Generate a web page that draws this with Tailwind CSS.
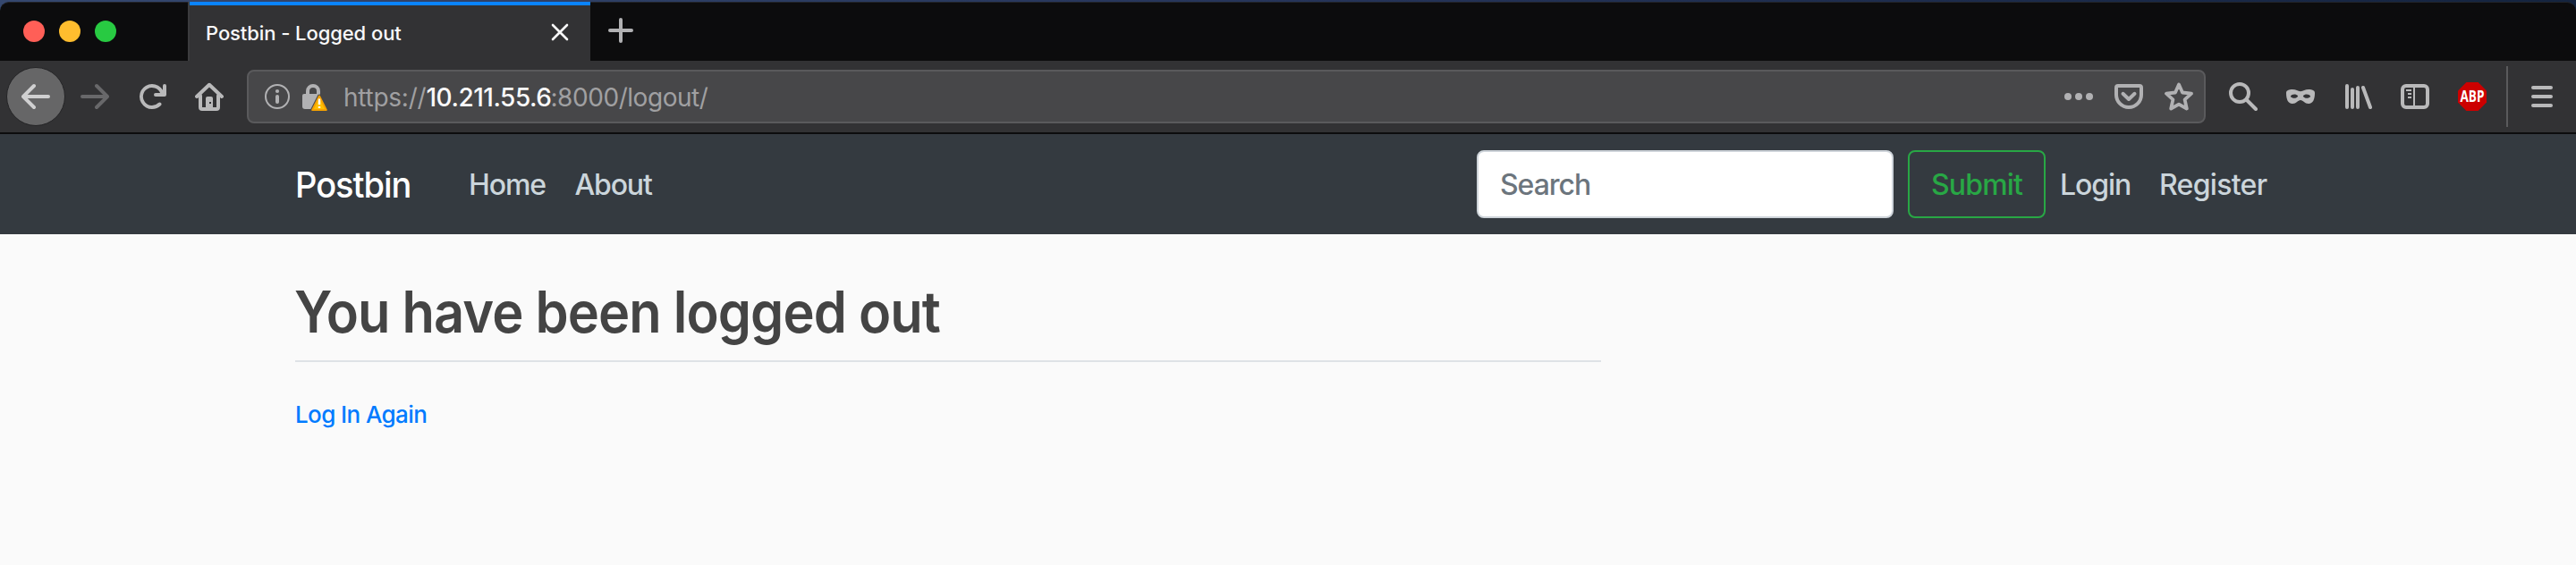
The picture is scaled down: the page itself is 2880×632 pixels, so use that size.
<!DOCTYPE html>
<html lang="en">
<head>
<meta charset="utf-8">
<title>Postbin - Logged out</title>
<script src="https://cdn.jsdelivr.net/npm/@tailwindcss/browser@4"></script>
</head>
<body class="bg-[#fafafa] font-['Inter','Liberation_Sans',sans-serif] w-[2880px] h-[632px] overflow-hidden">
<!-- Tab strip -->
<div class="bg-linear-to-r from-[#35486f] via-[#26355a] to-[#14243f] pt-0.5">
<div class="h-[66px] bg-[#0c0c0d] border-t border-[#222429] rounded-t-[10px] flex items-start">
  <div class="w-[210px] h-full pl-[26px] pt-5 flex gap-4">
    <i class="size-6 rounded-full bg-[#ff5f57]"></i>
    <i class="size-6 rounded-full bg-[#ffbd2e]"></i>
    <i class="size-6 rounded-full bg-[#28ca42]"></i>
  </div>
  <div class="relative -mt-px w-[450px] h-[66px] bg-[#323234] border-l-2 border-[#3c3c3e] flex items-start justify-between pl-[18px] pr-6">
    <div class="absolute top-0 left-0 right-0 h-1 bg-[#0a84ff]"></div>
    <span class="text-[22px] leading-[26px] mt-[22px] font-[450] tracking-[-0.080px] text-[#f9f9fa]">Postbin - Logged out</span>
    <svg class="w-5 h-5 mt-6" viewBox="0 0 20 20" stroke="#f9f9fa" stroke-width="2.6" stroke-linecap="round"><path d="M2 2l16 16M18 2L2 18"/></svg>
  </div>
  <svg class="w-7 h-7 ml-5 mt-[17px]" viewBox="0 0 28 28" stroke="#b1b1b3" stroke-width="4" stroke-linecap="round"><path d="M14 2v24M2 14h24"/></svg>
</div>
</div>
<!-- Toolbar -->
<div class="h-[82px] bg-[#323234] border-b-2 border-[#0c0c0d] flex items-center pl-[7px] text-[#b9b9ba]">
  <div class="size-[66px] rounded-full bg-[#666667] border border-[#242426] flex items-center justify-center">
    <svg class="size-8" viewBox="0 0 16 16" fill="#d0d0d1"><path d="M15 7H3.414l4.293-4.293a1 1 0 0 0-1.414-1.414l-6 6a1 1 0 0 0 0 1.414l6 6a1 1 0 0 0 1.414-1.414L3.414 9H15a1 1 0 0 0 0-2z"/></svg>
  </div>
  <svg class="size-8 ml-[17px] -scale-x-100" viewBox="0 0 16 16" fill="#68686a"><path d="M15 7H3.414l4.293-4.293a1 1 0 0 0-1.414-1.414l-6 6a1 1 0 0 0 0 1.414l6 6a1 1 0 0 0 1.414-1.414L3.414 9H15a1 1 0 0 0 0-2z"/></svg>
  <svg class="size-8 ml-8" viewBox="0 0 16 16" fill="currentColor"><path d="M15 1a1 1 0 0 0-1 1v2.418A6.995 6.995 0 1 0 8 15a6.954 6.954 0 0 0 4.95-2.05 1 1 0 0 0-1.414-1.414A5.019 5.019 0 1 1 12.549 6H10a1 1 0 0 0 0 2h5a1 1 0 0 0 1-1V2a1 1 0 0 0-1-1z"/></svg>
  <svg class="size-8 ml-8" viewBox="0 0 32 32" fill="none" stroke="currentColor" stroke-width="4" stroke-linecap="round" stroke-linejoin="round"><path d="M2 16L16 2.800 30 16"/><path d="M6 15v13a2 2 0 0 0 2 2h16a2 2 0 0 0 2-2V15"/><path fill="currentColor" stroke="none" d="M12 31V18a2 2 0 0 1 2-2h4a2 2 0 0 1 2 2v13z"/><path fill="#323234" stroke="none" d="M16 22h2v2h-2z"/></svg>
  <div class="ml-[26px] w-[2190px] h-[60px] rounded-lg bg-[#474749] border-2 border-[#5a5a5c] flex items-center pl-4 pr-3 text-[#b1b1b3]">
    <svg class="size-8" viewBox="0 0 32 32" fill="none" stroke="currentColor" stroke-width="2"><circle cx="16" cy="16" r="13"/><circle cx="16" cy="10" r="2.1" fill="currentColor" stroke="none"/><path d="M16 16v6" stroke-width="4" stroke-linecap="round"/></svg>
    <svg class="size-8 ml-3" viewBox="0 0 32 32"><path d="M6 15V10a6 6 0 0 1 12 0v3" fill="none" stroke="currentColor" stroke-width="4"/><path d="M2 13h18v4l-8 13H3a3 3 0 0 1-3-3V15a2 2 0 0 1 2-2z" fill="currentColor"/><path d="M19 15.500L11.200 31h15.600z" fill="#474749" stroke="#474749" stroke-width="4" stroke-linejoin="round"/><path d="M19 15.500L11.200 31h15.600z" fill="#ffbf00" stroke="#f5a100" stroke-width="2" stroke-linejoin="round"/><path d="M19 18.500v6.500M19 27v2" stroke="#fff" stroke-width="2.400"/></svg>
    <div class="flex text-[28px] leading-[34px] mt-0.5 ml-[14px] text-[#a0a0a2]"><span class="w-[92.500px] tracking-[-0.250px]">https://</span><span class="w-[139px] tracking-[-0.500px] font-medium text-[#f9f9fa]">10.211.55.6</span><span class="tracking-[-0.450px]">:8000/logout/</span></div>
    <span class="flex-1"></span>
    <svg class="size-8" viewBox="0 0 32 32" fill="currentColor"><circle cx="4" cy="16" r="4"/><circle cx="16" cy="16" r="4"/><circle cx="28" cy="16" r="4"/></svg>
    <svg class="size-8 ml-6" viewBox="0 0 32 32" fill="none" stroke="currentColor" stroke-width="4" stroke-linecap="round" stroke-linejoin="round"><path d="M4 4h24a2 2 0 0 1 2 2v8a14 14 0 0 1-28 0V6a2 2 0 0 1 2-2z"/><path d="M9.500 12.800l6.500 6.200 6.500-6.200"/></svg>
    <svg class="size-8 ml-6" viewBox="0 0 32 32" fill="none" stroke="currentColor" stroke-width="3.800" stroke-linejoin="round"><path d="M16 2.500l4 9 10 1.200-7.400 6.600 2.200 10.200L16 24.600l-8.800 4.900 2.200-10.200L2 12.700l10-1.200z"/></svg>
  </div>
  <svg class="size-8 ml-[26px]" viewBox="0 0 32 32" fill="none" stroke="currentColor" stroke-width="4" stroke-linecap="round"><circle cx="12" cy="12" r="10"/><path d="M19.500 19.500L30 30"/></svg>
  <svg class="size-8 ml-8" viewBox="0 0 32 32"><path fill="currentColor" fill-rule="evenodd" d="M0 12C0 9 3 8 7 8c4 0 6 2.200 9 2.200S21 8 25 8c4 0 7 1 7 4 0 7-2 12-7 12-4.500 0-6-4-9-4s-4.500 4-9 4c-5 0-7-5-7-12zM4.800 16c1.500-3 6.200-3.200 8.400-.6-1.500 3-6.200 3.200-8.400.6zM27.200 16c-1.500-3-6.200-3.200-8.400-.6 1.500 3 6.200 3.200 8.400.6z"/></svg>
  <svg class="size-8 ml-8" viewBox="0 0 32 32" fill="none" stroke="currentColor" stroke-width="4" stroke-linecap="round"><path d="M4 4v24M10 8v20M16 6v22M22 6l8 22"/></svg>
  <svg class="size-8 ml-8" viewBox="0 0 32 32" fill="none" stroke="currentColor"><rect x="2" y="4" width="28" height="24" rx="4" stroke-width="4"/><path d="M15 5v22" stroke-width="2"/><path d="M6 9h6M8 13h4M8 17h4" stroke-width="2"/></svg>
  <svg class="size-8 ml-8 overflow-visible" viewBox="0 0 32 32"><path fill="#cc0000" d="M9.400 0h13.200L32 9.400v13.200L22.600 32H9.400L0 22.600V9.400z"/><text x="2.500" y="22.200" textLength="27" lengthAdjust="spacingAndGlyphs" font-family="Open Sans" font-weight="700" font-size="17" fill="#fff">ABP</text></svg>
  <div class="ml-[22px] w-[2px] h-[68px] bg-[#5a5a5c]"></div>
  <svg class="size-8 ml-[22px]" viewBox="0 0 32 32" fill="none" stroke="currentColor" stroke-width="4" stroke-linecap="round"><path d="M6 6h20M6 16h20M6 26h20"/></svg>
</div>
<!-- Site navigation -->
<nav class="h-28 bg-[#343a40] flex items-center px-[330px] text-[32px] leading-[39px] font-[450] text-[#cbd5db]">
  <a class="mt-px w-[194px] text-[40px] leading-[49px] tracking-[-1.050px] text-white font-medium origin-left scale-x-95">Postbin</a>
  <a class="mt-px w-[118.500px] tracking-[-1.100px]">Home</a>
  <a class="mt-px tracking-[-1.150px]">About</a>
  <div class="ml-auto w-[466px] h-[76px] rounded-lg bg-white border-2 border-[#ced4da] flex items-center pl-6 text-[#6c757d]"><span class="mt-px tracking-[-1.050px]">Search</span></div>
  <div class="ml-4 w-[154px] h-[76px] rounded-lg border-2 border-[#28a745] flex items-center pl-6 text-[#28a745]"><span class="mt-px tracking-[-0.850px]">Submit</span></div>
  <a class="mt-px ml-4 w-[111px] tracking-[-1.050px]">Login</a>
  <a class="mt-px w-[136px] tracking-[-0.700px]">Register</a>
</nav>
<!-- Page content -->
<main class="pl-[330px] pt-12">
  <div class="w-[1460px] border-b-2 border-[#dee2e6] pb-4">
    <h1 class="w-fit -ml-px whitespace-nowrap text-[64px] leading-[77px] font-[580] tracking-[-1px] text-[#444] origin-left scale-x-93">You have been logged out</h1>
  </div>
  <a class="block mt-[43px] text-[26px] leading-[31px] font-[450] tracking-[-0.600px] text-[#007bff]">Log In Again</a>
</main>
</body>
</html>
